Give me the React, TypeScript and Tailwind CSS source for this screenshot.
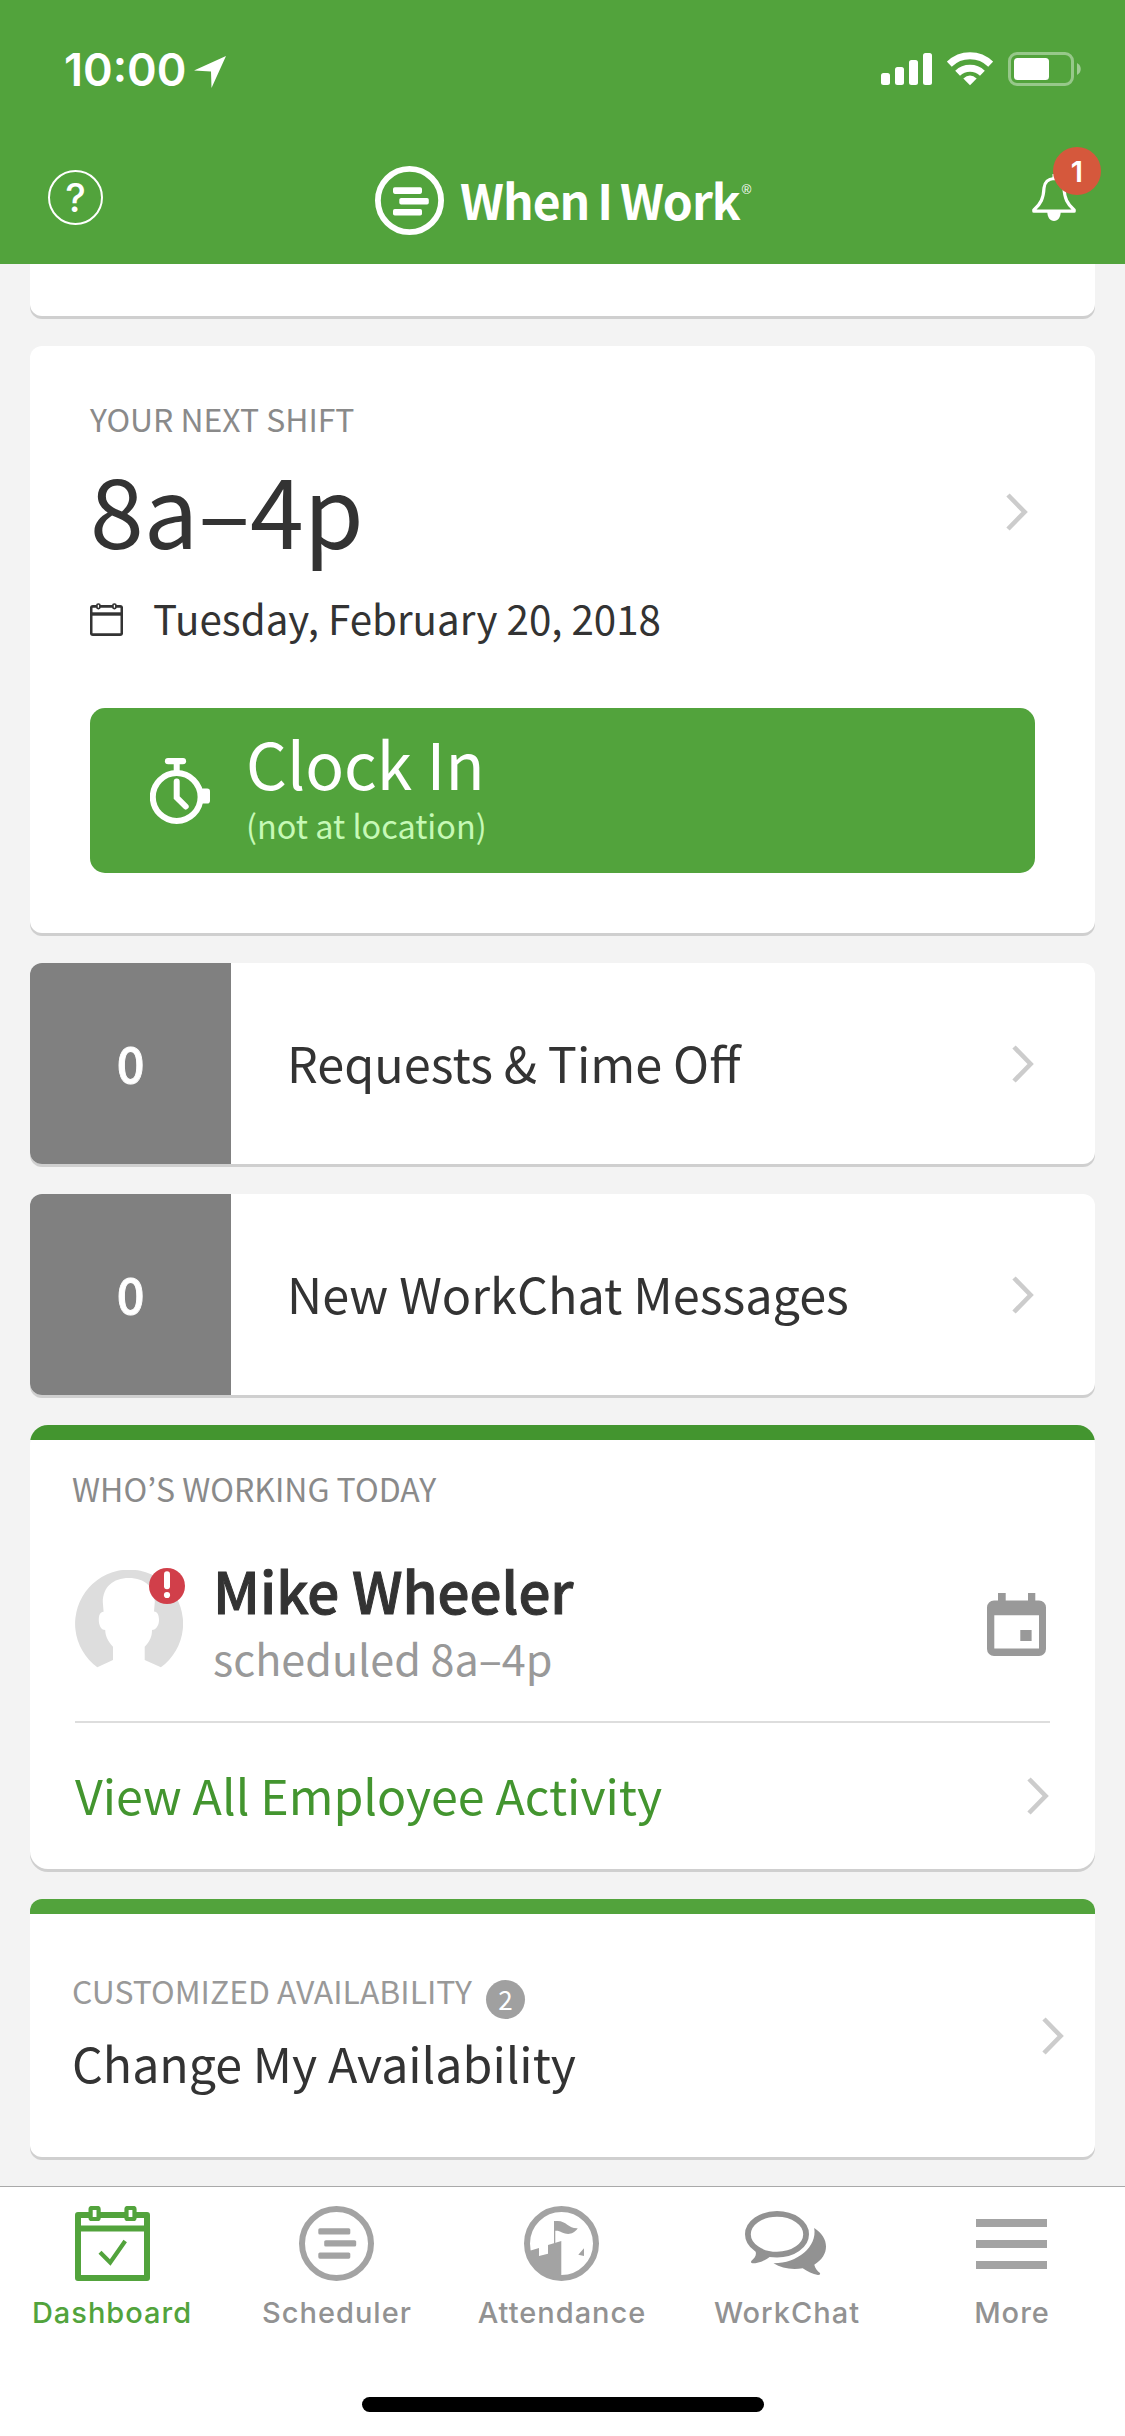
import type { ReactNode } from "react";

function Chevron() {
  return (
    <svg className="h-[38px] w-[22px] shrink-0" viewBox="0 0 22 38" fill="none">
      <path d="M2 2L18.6 19L2 36" stroke="#cccccc" strokeWidth="4.6" />
    </svg>
  );
}

function StatusBar() {
  return (
    <div className="flex h-[138px] items-center pr-11 pl-16">
      <span className="font-['Inter',sans-serif] text-[45px] leading-none font-semibold">10:00</span>
      <svg className="mt-1.5 ml-2 h-8 w-8" viewBox="0 0 32 32" fill="white">
        <path d="M32 0L17.5 32L17 15.5L0 14.5Z" />
      </svg>
      <div className="ml-auto flex items-center gap-[15px]">
        <svg className="h-[34px] w-[51px]" viewBox="0 0 51 34" fill="white">
          <rect x="0" y="21" width="9" height="12" rx="2.5" />
          <rect x="14" y="15" width="9" height="18" rx="2.5" />
          <rect x="28" y="8" width="9" height="25" rx="2.5" />
          <rect x="42" y="1" width="9" height="32" rx="2.5" />
        </svg>
        <svg className="h-[34px] w-[46px]" viewBox="0 0 46 34" fill="none">
          <path d="M2.3 12.2A29.5 29.5 0 0 1 43.7 12.2" stroke="white" strokeWidth="7" />
          <path d="M10.6 21.2A18 18 0 0 1 35.4 21.2" stroke="white" strokeWidth="7" />
          <path d="M16.3 26.6Q23 20.6 29.7 26.6L23 33.3Z" fill="white" />
        </svg>
        <svg className="h-[34px] w-[73px]" viewBox="0 0 73 34" fill="none">
          <rect x="1.5" y="1.5" width="63" height="31" rx="7.5" stroke="white" strokeOpacity="0.4" strokeWidth="3" />
          <rect x="6" y="6" width="35" height="22" rx="3.5" fill="white" />
          <path d="M69 11C74 13.5 74 20.5 69 23Z" fill="white" fillOpacity="0.45" />
        </svg>
      </div>
    </div>
  );
}

function NavBar() {
  return (
    <div className="flex h-[126px] items-center px-[47px]">
      <div className="mb-2 ml-px flex size-[55px] items-center justify-center rounded-full border-[2.5px] border-white">
        <span className="font-['Inter',sans-serif] text-[39px] leading-none font-medium">?</span>
      </div>
      <div className="ml-[272px] flex items-center">
        <svg className="size-[70px]" viewBox="0 0 70 70" fill="none">
          <circle cx="34.5" cy="34.5" r="31.6" stroke="white" strokeWidth="5.8" />
          <g fill="white">
            <rect x="18" y="21.3" width="29" height="6.6" rx="1.8" />
            <rect x="24.3" y="32" width="29.5" height="6.6" rx="1.8" />
            <rect x="18" y="43" width="29" height="6.6" rx="1.8" />
          </g>
        </svg>
        <span className="mb-[5px] ml-[15px] text-[48px] leading-[60px] font-bold tracking-[-1px] whitespace-nowrap [word-spacing:-2px]">
          When I Work
        </span>
        <span className="mb-[24px] ml-[2px] font-['Liberation_Sans',sans-serif] text-[13px] leading-none">®</span>
      </div>
      <div className="relative mb-2 ml-auto">
        <svg className="h-[50px] w-12" viewBox="0 0 48 50" fill="none">
          <path d="M24 2V6" stroke="white" strokeWidth="3" />
          <path
            d="M24 6.5C17 7 14.5 11 14 16C13.5 26 11 32 3.8 38V39.2H44.2V38C37 32 34.5 26 34 16C33.5 11 31 7 24 6.5Z"
            stroke="white"
            strokeWidth="3.2"
            strokeLinejoin="round"
          />
          <path d="M17.3 40H30.7C30.7 45 28 49 24 49S17.3 45 17.3 40Z" fill="white" />
        </svg>
        <span className="absolute -top-[25px] left-[23px] flex size-12 items-center justify-center rounded-full bg-[#d5583c] font-['Inter',sans-serif] text-[29px] leading-none font-semibold">
          1
        </span>
      </div>
    </div>
  );
}

function Card({ className, children }: { className: string; children?: ReactNode }) {
  return <section className={`shrink-0 overflow-hidden bg-white shadow-[0_3px_0_#cfcfcf] ${className}`}>{children}</section>;
}

function CountRow({ count, label }: { count: number; label: string }) {
  return (
    <Card className="flex h-[201px] rounded-xl">
      <div className="flex w-[201px] items-center justify-center bg-[#808080] pb-[3px] text-[48.6px] leading-[60px] font-medium text-white [-webkit-text-stroke:0.9px_white]">
        {count}
      </div>
      <div className="flex flex-1 items-center justify-between pr-[61px] pl-14">
        <span className="pb-[3px] text-[48.6px] leading-[60px]">{label}</span>
        <Chevron />
      </div>
    </Card>
  );
}

function NextShiftCard() {
  return (
    <Card className="h-[587px] rounded-xl px-[60px] pt-[52px]">
      <div className="flex items-center justify-between pr-[7px]">
        <div>
          <div className="text-[31.9px] leading-10 text-[#8a8a8a]">YOUR NEXT SHIFT</div>
          <div className="mt-3.5 text-[96.8px] leading-[110px]">8a–4p</div>
          <div className="mt-[31px] flex items-center">
            <svg className="mt-0.5 h-[33px] w-[33px]" viewBox="0 0 33 33" fill="none" stroke="#333333">
              <rect x="1.2" y="3.4" width="30.6" height="28.2" rx="1.5" strokeWidth="2.6" />
              <path d="M1 11H32" strokeWidth="3.4" />
              <rect x="6.9" y="1" width="3" height="4.6" rx="1.3" fill="white" strokeWidth="1.7" />
              <rect x="22.9" y="1" width="3" height="4.6" rx="1.3" fill="white" strokeWidth="1.7" />
            </svg>
            <span className="ml-[30px] text-[40.3px] leading-[50px]">Tuesday, February 20, 2018</span>
          </div>
        </div>
        <div className="mb-[18px]">
          <Chevron />
        </div>
      </div>
      <button className="mt-[65px] flex h-[165px] w-full items-start rounded-[15px] bg-[#52a33c] pt-[19px] pl-[60px] text-left text-white">
        <svg className="mt-[31px] h-[66px] w-[60px]" viewBox="0 0 60 66" fill="none" stroke="white">
          <circle cx="26.7" cy="39" r="23.9" strokeWidth="6" />
          <path d="M18 3.2H33" strokeWidth="6.2" strokeLinecap="round" />
          <path d="M26.7 3V14" strokeWidth="6" />
          <path d="M26.7 23.5V39.5L35.7 48.5" strokeWidth="6" strokeLinecap="round" />
          <rect x="50" y="30.5" width="10" height="15" rx="2.8" fill="white" stroke="none" />
        </svg>
        <span className="ml-9 flex flex-col gap-2">
          <span className="text-[64.2px] leading-[70px]">Clock In</span>
          <span className="text-[32.4px] leading-10 text-[#c6f9b6]">(not at location)</span>
        </span>
      </button>
    </Card>
  );
}

function WorkingTodayCard() {
  return (
    <Card className="h-[444px] rounded-[18px]">
      <div className="h-[15px] bg-[#43952f]" />
      <div className="pt-7 pl-[42px] font-['Noto_Sans_CJK_KR',sans-serif] text-[32px] leading-10 text-[#8a8a8a]">
        WHO’S WORKING TODAY
      </div>
      <div className="mx-[45px] flex h-[215px] border-b-2 border-[#dddddd] pt-[46px]">
        <div className="relative mt-4 size-[108px] shrink-0">
          <svg className="size-[108px]" viewBox="0 0 108 108">
            <path
              d="M22.3 97.3A54 54 0 1 1 85.9 97.3L69.7 90V76.7C75 71 77 67 77 60C81 60 84 55.5 84 50C84 45 82.5 42 79 41.5L79.8 32C79.8 17 70 8 53.8 8C38 8 28 17 27.8 32L28.6 41.7C25 42 23.8 45 23.8 50C23.8 55 26 60 30.2 60C30.5 67 33 71 38 76.7V90Z"
              fill="#dddddd"
            />
          </svg>
          <svg className="absolute -top-0.5 left-[74px] size-9" viewBox="0 0 36 36">
            <circle cx="18" cy="18" r="18" fill="#d13f4a" />
            <rect x="15" y="3.3" width="6" height="18" rx="3" fill="white" />
            <circle cx="18" cy="27" r="3.1" fill="white" />
          </svg>
        </div>
        <div className="ml-[30px] flex flex-col gap-2">
          <span className="text-[56.5px] leading-[70px] font-medium [-webkit-text-stroke:1px_#333333]">Mike Wheeler</span>
          <span className="text-[43.1px] leading-[50px] text-[#999999]">scheduled 8a–4p</span>
        </div>
        <svg className="mt-[39px] mr-1 ml-auto h-[63px] w-[59px]" viewBox="0 0 59 63">
          <path
            d="M11 0h7.7v7.4h22.3V0h7.3v7.4H52a7 7 0 0 1 7 7V56a7 7 0 0 1-7 7H7a7 7 0 0 1-7-7V14.4a7 7 0 0 1 7-7h4zM7.3 22.3v33.2h44.7V22.3z"
            fill="#999999"
            fillRule="evenodd"
          />
          <rect x="33.3" y="37" width="11.3" height="11" fill="#999999" />
        </svg>
      </div>
      <div className="flex h-[146px] items-center justify-between pr-[46px] pl-[45px]">
        <span className="pb-1 text-[48.3px] leading-[60px] text-[#43952f]">View All Employee Activity</span>
        <Chevron />
      </div>
    </Card>
  );
}

function AvailabilityCard() {
  return (
    <Card className="h-[258px] rounded-xl">
      <div className="h-[15px] bg-[#52a33c]" />
      <div className="flex h-[243px] items-center justify-between pr-[31px] pl-[42px]">
        <div className="pb-[10px]">
          <div className="flex items-start">
            <span className="text-[31.9px] leading-10 text-[#999999]">CUSTOMIZED AVAILABILITY</span>
            <span className="mt-2.5 -mb-2.5 ml-[14px] flex size-[39px] items-center justify-center rounded-full bg-[#a0a0a0] text-[26px] leading-none text-white">
              2
            </span>
          </div>
          <div className="mt-[22px] text-[48.3px] leading-[60px]">Change My Availability</div>
        </div>
        <Chevron />
      </div>
    </Card>
  );
}

function DashboardIcon() {
  return (
    <svg className="size-[75px]" viewBox="0 0 75 75" fill="none" stroke="#52a33c">
      <rect x="3" y="9" width="69" height="63" strokeWidth="6" strokeLinejoin="round" />
      <path d="M3 22.5H72" strokeWidth="6" />
      <rect x="15.6" y="2" width="8" height="11" rx="1" fill="white" strokeWidth="4.2" />
      <rect x="51.5" y="2" width="8" height="11" rx="1" fill="white" strokeWidth="4.2" />
      <path d="M25 46.3L35.2 56.5L50.2 35" strokeWidth="4.2" />
    </svg>
  );
}

function SchedulerIcon() {
  return (
    <svg className="mr-0.5 size-[75px]" viewBox="0 0 75 75" fill="none">
      <circle cx="37.5" cy="37.5" r="34.5" stroke="#a3a3a3" strokeWidth="6" />
      <g fill="#a3a3a3">
        <rect x="19.3" y="22.2" width="32" height="6.3" rx="1.6" />
        <rect x="25.2" y="34.2" width="32" height="6.3" rx="1.6" />
        <rect x="19.3" y="46.4" width="32" height="6.3" rx="1.6" />
      </g>
    </svg>
  );
}

function AttendanceIcon() {
  return (
    <svg className="mr-0.5 size-[75px]" viewBox="0 0 75 75" fill="none">
      <circle cx="37.5" cy="37.5" r="34.5" stroke="#a3a3a3" strokeWidth="6" />
      <g fill="#a3a3a3">
        <path d="M5 45L15 42V50L24 47.7V39L37.3 35V72C22 72 8 62 5 45Z" />
        <path d="M30 15H31.3V38H30Z" />
        <path d="M30.3 15.3C42 13 43.5 22.8 53.7 22.3C49.5 29 43 28.7 38 26.5C35.5 25.3 33.5 24.5 30.3 25Z" />
        <path d="M54.3 48.7L60 42.3V50Z" />
      </g>
    </svg>
  );
}

function WorkChatIcon() {
  return (
    <svg className="mt-[5px] mr-1 mb-1.5 h-16 w-[81px]" viewBox="0 0 81 64" fill="none">
      <ellipse cx="32" cy="23.3" rx="29.1" ry="20.4" stroke="#929292" strokeWidth="5.8" />
      <g fill="#929292">
        <path d="M12 37.5L18 40.5L19 42L21.5 40.8L26 45C21 49 14 52.3 7.5 52.3C5.5 52.2 5.7 50.3 7 49.3C10 46.5 12.3 43.5 10 39Z" />
        <path d="M69.2 17C77 22 81 28.5 81 35.5C81 42.5 77 49 69.3 53.7C70 57.5 72.5 60 75 62C75.5 63.5 74.5 64 73 63.9C67.5 63 62.5 60.5 57.7 57.3C46 59.2 36.5 57 28.5 52.3C52 52.5 72.5 36 69.2 17Z" />
      </g>
    </svg>
  );
}

function MoreIcon() {
  return (
    <div className="mt-[13px] mr-0.5 mb-3 flex h-[50px] w-[71px] flex-col justify-between">
      <div className="h-2 bg-[#a3a3a3]" />
      <div className="h-2 bg-[#a3a3a3]" />
      <div className="h-2 bg-[#a3a3a3]" />
    </div>
  );
}

const tabs = [
  { label: "Dashboard", icon: <DashboardIcon />, color: "text-[#52a33c]" },
  { label: "Scheduler", icon: <SchedulerIcon />, color: "text-[#929292]" },
  { label: "Attendance", icon: <AttendanceIcon />, color: "text-[#929292]" },
  { label: "WorkChat", icon: <WorkChatIcon />, color: "text-[#929292]" },
  { label: "More", icon: <MoreIcon />, color: "text-[#929292]" },
];

export default function App() {
  return (
    <div className="flex h-[2436px] w-[1125px] flex-col overflow-hidden bg-[#f3f3f3] font-['Noto_Sans_CJK_SC',sans-serif] text-[#333333]">
      <header className="h-[264px] shrink-0 bg-[#52a33c] text-white">
        <StatusBar />
        <NavBar />
      </header>
      <main className="flex h-[1922px] shrink-0 flex-col gap-[30px] px-[30px]">
        <Card className="h-[52px] rounded-b-xl" />
        <NextShiftCard />
        <CountRow count={0} label="Requests & Time Off" />
        <CountRow count={0} label="New WorkChat Messages" />
        <WorkingTodayCard />
        <AvailabilityCard />
      </main>
      <nav className="flex h-[250px] flex-col items-center border-t border-[#a9a9a9] bg-white">
        <div className="grid w-full grid-cols-5 pt-[19px]">
          {tabs.map((tab) => (
            <div key={tab.label} className="flex flex-col items-center">
              {tab.icon}
              <span
                className={`mt-[12px] mr-px font-['Inter',sans-serif] text-[29px] leading-10 font-medium tracking-[1px] ${tab.color}`}
              >
                {tab.label}
              </span>
            </div>
          ))}
        </div>
        <div className="mt-[64px] h-[15px] w-[402px] rounded-full bg-black" />
      </nav>
    </div>
  );
}
